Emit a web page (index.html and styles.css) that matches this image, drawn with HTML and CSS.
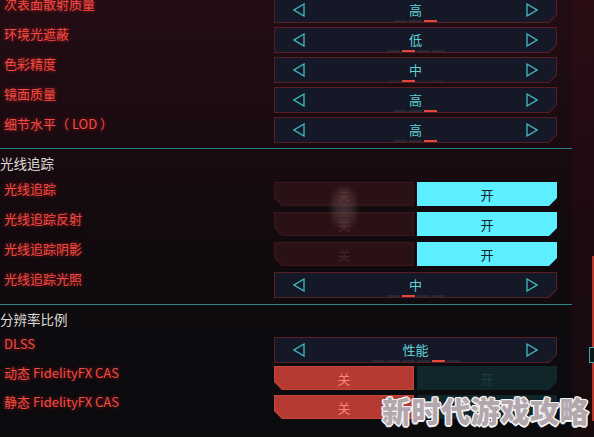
FILE: index.html
```html
<!DOCTYPE html>
<html lang="zh-CN">
<head>
<meta charset="utf-8">
<title>设置</title>
<link rel="stylesheet" href="styles.css">
</head>
<body>
<div class="screen">
  <div class="settings">
    <div class="group g1">
      <div class="row">
        <div class="label">次表面散射质量</div>
        <div class="sel"><div class="sel-in">
          <svg class="arr" viewBox="0 0 12 14"><polygon points="11,1 1,7 11,13"/></svg>
          <div class="val"><span class="txt">高</span><span class="segs"><i></i><i></i><i class="on"></i></span></div>
          <svg class="arr" viewBox="0 0 12 14"><polygon points="1,1 11,7 1,13"/></svg>
        </div></div>
      </div>
      <div class="row">
        <div class="label">环境光遮蔽</div>
        <div class="sel"><div class="sel-in">
          <svg class="arr" viewBox="0 0 12 14"><polygon points="11,1 1,7 11,13"/></svg>
          <div class="val"><span class="txt">低</span><span class="segs"><i></i><i class="on"></i><i></i><i></i></span></div>
          <svg class="arr" viewBox="0 0 12 14"><polygon points="1,1 11,7 1,13"/></svg>
        </div></div>
      </div>
      <div class="row">
        <div class="label">色彩精度</div>
        <div class="sel"><div class="sel-in">
          <svg class="arr" viewBox="0 0 12 14"><polygon points="11,1 1,7 11,13"/></svg>
          <div class="val"><span class="txt">中</span><span class="segs faint"><i></i><i class="on"></i><i></i><i></i></span></div>
          <svg class="arr" viewBox="0 0 12 14"><polygon points="1,1 11,7 1,13"/></svg>
        </div></div>
      </div>
      <div class="row">
        <div class="label">镜面质量</div>
        <div class="sel"><div class="sel-in">
          <svg class="arr" viewBox="0 0 12 14"><polygon points="11,1 1,7 11,13"/></svg>
          <div class="val"><span class="txt">高</span><span class="segs"><i></i><i></i><i class="on"></i></span></div>
          <svg class="arr" viewBox="0 0 12 14"><polygon points="1,1 11,7 1,13"/></svg>
        </div></div>
      </div>
      <div class="row">
        <div class="label">细节水平（ LOD ）</div>
        <div class="sel"><div class="sel-in">
          <svg class="arr" viewBox="0 0 12 14"><polygon points="11,1 1,7 11,13"/></svg>
          <div class="val"><span class="txt">高</span><span class="segs"><i></i><i></i><i class="on"></i></span></div>
          <svg class="arr" viewBox="0 0 12 14"><polygon points="1,1 11,7 1,13"/></svg>
        </div></div>
      </div>
    </div>

    <div class="divider d1"></div>
    <div class="header">光线追踪</div>

    <div class="group g2">
      <div class="row">
        <div class="label">光线追踪</div>
        <div class="tog">
          <div class="btn off-dim"><div class="btn-in">关</div></div>
          <div class="btn on-cyan"><div class="btn-in">开</div></div>
        </div>
      </div>
      <div class="row">
        <div class="label">光线追踪反射</div>
        <div class="tog">
          <div class="btn off-dim"><div class="btn-in">关</div></div>
          <div class="btn on-cyan"><div class="btn-in">开</div></div>
        </div>
      </div>
      <div class="row">
        <div class="label">光线追踪阴影</div>
        <div class="tog">
          <div class="btn off-dim"><div class="btn-in">关</div></div>
          <div class="btn on-cyan"><div class="btn-in">开</div></div>
        </div>
      </div>
      <div class="row">
        <div class="label">光线追踪光照</div>
        <div class="sel"><div class="sel-in">
          <svg class="arr" viewBox="0 0 12 14"><polygon points="11,1 1,7 11,13"/></svg>
          <div class="val"><span class="txt">中</span><span class="segs"><i></i><i class="on"></i><i></i><i></i></span></div>
          <svg class="arr" viewBox="0 0 12 14"><polygon points="1,1 11,7 1,13"/></svg>
        </div></div>
      </div>
    </div>

    <div class="divider d2"></div>
    <div class="header">分辨率比例</div>

    <div class="group g3">
      <div class="row">
        <div class="label">DLSS</div>
        <div class="sel"><div class="sel-in">
          <svg class="arr" viewBox="0 0 12 14"><polygon points="11,1 1,7 11,13"/></svg>
          <div class="val"><span class="txt">性能</span><span class="segs"><i></i><i></i><i></i><i></i><i class="on"></i><i></i></span></div>
          <svg class="arr" viewBox="0 0 12 14"><polygon points="1,1 11,7 1,13"/></svg>
        </div></div>
      </div>
      <div class="row">
        <div class="label">动态 FidelityFX CAS</div>
        <div class="tog">
          <div class="btn off-red"><div class="btn-in">关</div></div>
          <div class="btn on-dim"><div class="btn-in">开</div></div>
        </div>
      </div>
      <div class="row">
        <div class="label">静态 FidelityFX CAS</div>
        <div class="tog">
          <div class="btn off-red"><div class="btn-in">关</div></div>
          <div class="btn on-dim"><div class="btn-in">开</div></div>
        </div>
      </div>
    </div>
  </div>
  <div class="side"></div>

  <div class="glare"></div>
  <div class="scroll-line"></div>
  <div class="scroll-thumb"></div>
  <div class="watermark">新时代游戏攻略</div>
</div>
</body>
</html>
```

FILE: styles.css
```css
html, body {
  margin: 0;
  padding: 0;
  background: #0d0b0f;
}

.screen {
  position: relative;
  width: 594px;
  height: 437px;
  overflow: hidden;
  display: flex;
  font-family: "Noto Sans CJK SC", "Noto Sans", sans-serif;
  background: linear-gradient(180deg, #230d14 0%, #1a0b11 30%, #110a0e 55%, #0d0b0f 80%, #0b0b0e 100%);
}

.settings {
  width: 572px;
  display: flex;
  flex-direction: column;
}

.side {
  flex: 1;
  background: rgba(70, 12, 22, 0.22);
}

.group {
  display: flex;
  flex-direction: column;
}

.g1 { margin-top: -3px; }

.row {
  display: flex;
  height: 30px;
  flex-shrink: 0;
}

.g3 .row { height: 29px; }

.label {
  width: 274px;
  box-sizing: border-box;
  padding-left: 4px;
  font-size: 13px;
  line-height: 13px;
  color: #f24b42;
  text-shadow: 0 0 4px rgba(255, 40, 40, 0.6);
  white-space: nowrap;
}

.divider {
  height: 1px;
  background: #2f8189;
  flex-shrink: 0;
}
.d1 { margin-top: 1px; }
.d2 { margin-top: 2px; }

.header {
  height: 33px;
  box-sizing: border-box;
  padding-top: 6px;
  font-size: 13.5px;
  line-height: 16px;
  color: #dedbd6;
  flex-shrink: 0;
}
.d2 + .header { height: 32px; }

/* selector box */
.sel {
  width: 283px;
  height: 26px;
  box-sizing: border-box;
  padding: 1px;
  background: #5a1c25;
  clip-path: polygon(0 0, 100% 0, 100% calc(100% - 8px), calc(100% - 8px) 100%, 0 100%);
}

.sel-in {
  height: 100%;
  box-sizing: border-box;
  background: #151927;
  clip-path: polygon(0 0, 100% 0, 100% calc(100% - 7.6px), calc(100% - 7.6px) 100%, 0 100%);
  display: flex;
  align-items: center;
  padding: 0 18px;
}

.arr {
  width: 12px;
  height: 14px;
  fill: none;
  stroke: #3fbcc4;
  stroke-width: 1.3;
  stroke-linejoin: miter;
}

.val {
  flex: 1;
  align-self: stretch;
  display: flex;
  flex-direction: column;
  align-items: center;
  padding-top: 4px;
}

.txt {
  font-size: 13px;
  line-height: 15px;
  color: #5fd0d4;
}

.segs {
  display: flex;
  gap: 2px;
  margin-top: 3px;
}

.segs i {
  display: block;
  width: 13px;
  height: 2px;
  background: #252935;
}
.segs.faint i { background: #1c202c; }
.segs i.on { background: #e4483d; }

/* toggles */
.tog {
  width: 283px;
  height: 24px;
  display: flex;
  gap: 3px;
}

.btn {
  width: 140px;
  height: 24px;
  box-sizing: border-box;
  padding: 1px;
}

.btn-in {
  height: 100%;
  display: flex;
  align-items: center;
  justify-content: center;
  font-size: 13px;
}

.off-dim, .off-dim .btn-in,
.off-red, .off-red .btn-in {
  clip-path: polygon(0 0, 100% 0, 100% 100%, 8px 100%, 0 calc(100% - 8px));
}

.on-cyan, .on-cyan .btn-in,
.on-dim, .on-dim .btn-in {
  clip-path: polygon(0 0, 100% 0, 100% calc(100% - 8px), calc(100% - 8px) 100%, 0 100%);
}

.off-dim { background: #3c161a; }
.off-dim .btn-in { background: #2a1115; color: #4a2125; }

.on-cyan { background: #5cefff; }
.on-cyan .btn-in { background: #5cefff; color: #16242a; }

.off-red { background: #c4443a; }
.off-red .btn-in { background: #b53a31; color: #ff8474; }

.on-dim { background: #10262a; }
.on-dim .btn-in { background: #10262a; color: #1d3d40; }

/* overlays */
.glare {
  position: absolute;
  left: 330px;
  top: 186px;
  width: 28px;
  height: 44px;
  border-radius: 50%;
  background: radial-gradient(ellipse at center, rgba(190, 160, 160, 0.28) 0%, rgba(190, 160, 160, 0.12) 55%, rgba(190, 160, 160, 0) 100%);
  filter: blur(2px);
}

.scroll-line {
  position: absolute;
  left: 592px;
  top: 256px;
  width: 2px;
  height: 165px;
  background: #b8352c;
}

.scroll-thumb {
  position: absolute;
  left: 589px;
  top: 347px;
  width: 6px;
  height: 16px;
  box-sizing: border-box;
  border: 1px solid #3aa9ad;
  background: #0f1a1c;
}

.watermark {
  position: absolute;
  left: 382px;
  top: 392px;
  font-family: "Noto Sans CJK SC", sans-serif;
  font-weight: 900;
  font-size: 29px;
  line-height: 36px;
  letter-spacing: 0.6px;
  color: #b2a7ad;
  white-space: nowrap;
  text-shadow:
    1.5px 0 0 #f4f2f3, -1.5px 0 0 #f4f2f3, 0 1.5px 0 #f4f2f3, 0 -1.5px 0 #f4f2f3,
    1px 1px 0 #f4f2f3, -1px 1px 0 #f4f2f3, 1px -1px 0 #f4f2f3, -1px -1px 0 #f4f2f3;
}
```
